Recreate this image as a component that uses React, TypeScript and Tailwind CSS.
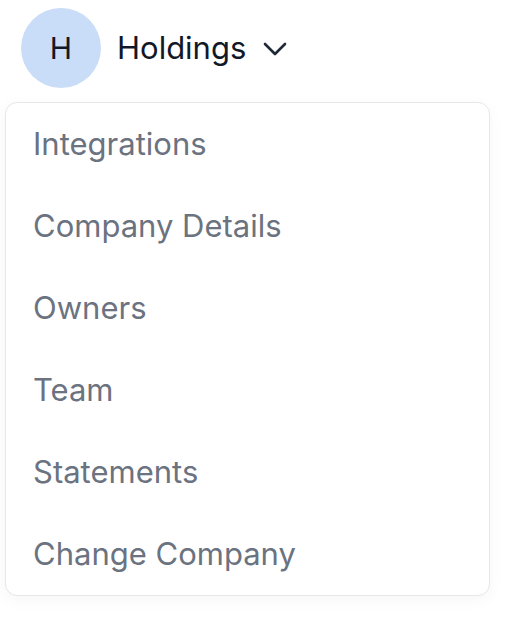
import React from "react";

const items = ["Integrations", "Company Details", "Owners", "Team", "Statements", "Change Company"];

export default function App() {
  return (
    <div className="w-[506px] h-[626px] bg-white" style={{ fontFamily: "Inter, 'Noto Sans', sans-serif" }}>
      <div className="flex items-center pl-[21px] pt-[8px]">
        <div className="w-[80px] h-[80px] rounded-full bg-[#c9dcf8] flex items-center justify-center text-[30px] text-[#111827]">H</div>
        <span className="ml-[16px] text-[31px] text-[#111827]">Holdings</span>
        <svg className="ml-[16px] mt-[2px]" width="26" height="16" viewBox="0 0 26 16" fill="none">
          <path d="M3 3 L13 13 L23 3" stroke="#1f2937" strokeWidth="2.6" strokeLinecap="round" strokeLinejoin="round" />
        </svg>
      </div>
      <div className="ml-[5px] mt-[14px] w-[485px] rounded-[12px] border border-[#e5e7eb] bg-white shadow-[0_4px_16px_rgba(0,0,0,0.04)]">
        {items.map((t) => (
          <div key={t} className="h-[82px] flex items-center pl-[27px] text-[31px] text-[#6b7280]">
            {t}
          </div>
        ))}
      </div>
    </div>
  );
}
